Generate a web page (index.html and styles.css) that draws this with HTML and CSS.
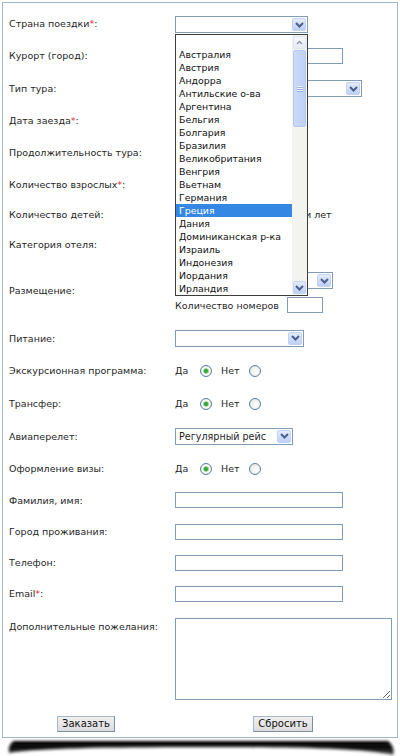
FILE: index.html
```html
<!DOCTYPE html>
<html lang="ru">
<head>
<meta charset="utf-8">
<title>Заявка на тур</title>
<link rel="stylesheet" href="styles.css">
</head>
<body>
<div class="form-box">
  <div class="form-grid">
    <div class="label">Страна поездки<span class="req">*</span>:</div>
    <div class="ctl">
      <div class="dd-wrap">
        <div class="select w133"><span class="val"></span><span class="arrow"><svg width="9" height="6" viewBox="0 0 9 6"><path d="M1 1 L4.5 4.5 L8 1" fill="none" stroke="#4a5f8c" stroke-width="2"/></svg></span></div>
        <div class="listbox">
          <ul class="items">
            <li class="item"></li>
            <li class="item">Австралия</li>
            <li class="item">Австрия</li>
            <li class="item">Андорра</li>
            <li class="item">Антильские о-ва</li>
            <li class="item">Аргентина</li>
            <li class="item">Бельгия</li>
            <li class="item">Болгария</li>
            <li class="item">Бразилия</li>
            <li class="item">Великобритания</li>
            <li class="item">Венгрия</li>
            <li class="item">Вьетнам</li>
            <li class="item">Германия</li>
            <li class="item selected">Греция</li>
            <li class="item">Дания</li>
            <li class="item">Доминиканская р-ка</li>
            <li class="item">Израиль</li>
            <li class="item">Индонезия</li>
            <li class="item">Иордания</li>
            <li class="item">Ирландия</li>
          </ul>
          <div class="scrollbar">
            <div class="sb-btn"><svg width="7" height="5" viewBox="0 0 7 5"><path d="M1 4 L3.5 1.5 L6 4" fill="none" stroke="#8a98b0" stroke-width="1.4"/></svg></div>
            <div class="sb-thumb"><span class="grip"></span></div>
            <div class="sb-track"></div>
            <div class="sb-btn sb-down"><svg width="9" height="6" viewBox="0 0 9 6"><path d="M1 1 L4.5 4.5 L8 1" fill="none" stroke="#4a5f8c" stroke-width="2"/></svg></div>
          </div>
        </div>
      </div>
    </div>

    <div class="label">Курорт (город):</div>
    <div class="ctl"><input class="text w168" type="text"></div>

    <div class="label">Тип тура:</div>
    <div class="ctl"><div class="select w187"><span class="val"></span><span class="arrow"><svg width="9" height="6" viewBox="0 0 9 6"><path d="M1 1 L4.5 4.5 L8 1" fill="none" stroke="#4a5f8c" stroke-width="2"/></svg></span></div></div>

    <div class="label">Дата заезда<span class="req">*</span>:</div>
    <div class="ctl"><input class="text w90" type="text"></div>

    <div class="label">Продолжительность тура:</div>
    <div class="ctl"><div class="select w60"><span class="val"></span><span class="arrow"></span></div></div>

    <div class="label">Количество взрослых<span class="req">*</span>:</div>
    <div class="ctl"><div class="select w45"><span class="val"></span><span class="arrow"></span></div></div>

    <div class="label">Количество детей:</div>
    <div class="ctl"><div class="select w122"><span class="val"></span><span class="arrow"></span></div><span class="kids-age">и лет</span></div>

    <div class="label">Категория отеля:</div>
    <div class="ctl"><div class="select w110"><span class="val"></span><span class="arrow"></span></div></div>

    <div class="label">Размещение:</div>
    <div class="ctl stack">
      <div class="select w158"><span class="val"></span><span class="arrow"><svg width="9" height="6" viewBox="0 0 9 6"><path d="M1 1 L4.5 4.5 L8 1" fill="none" stroke="#4a5f8c" stroke-width="2"/></svg></span></div>
      <div class="rooms"><span class="rooms-text">Количество номеров</span><input class="text w36" type="text"></div>
    </div>

    <div class="label">Питание:</div>
    <div class="ctl"><div class="select w129"><span class="val"></span><span class="arrow"><svg width="9" height="6" viewBox="0 0 9 6"><path d="M1 1 L4.5 4.5 L8 1" fill="none" stroke="#4a5f8c" stroke-width="2"/></svg></span></div></div>

    <div class="label">Экскурсионная программа:</div>
    <div class="ctl"><span class="opt-yes">Да</span><input class="radio" type="radio" name="exc" checked><span class="opt-no">Нет</span><input class="radio" type="radio" name="exc"></div>

    <div class="label">Трансфер:</div>
    <div class="ctl"><span class="opt-yes">Да</span><input class="radio" type="radio" name="tr" checked><span class="opt-no">Нет</span><input class="radio" type="radio" name="tr"></div>

    <div class="label">Авиаперелет:</div>
    <div class="ctl"><div class="select w118"><span class="val">Регулярный рейс</span><span class="arrow"><svg width="9" height="6" viewBox="0 0 9 6"><path d="M1 1 L4.5 4.5 L8 1" fill="none" stroke="#4a5f8c" stroke-width="2"/></svg></span></div></div>

    <div class="label">Оформление визы:</div>
    <div class="ctl"><span class="opt-yes">Да</span><input class="radio" type="radio" name="visa" checked><span class="opt-no">Нет</span><input class="radio" type="radio" name="visa"></div>

    <div class="label">Фамилия, имя:</div>
    <div class="ctl"><input class="text w168" type="text"></div>

    <div class="label">Город проживания:</div>
    <div class="ctl"><input class="text w168" type="text"></div>

    <div class="label">Телефон:</div>
    <div class="ctl"><input class="text w168" type="text"></div>

    <div class="label">Email<span class="req">*</span>:</div>
    <div class="ctl"><input class="text w168" type="text"></div>

    <div class="label label-top">Дополнительные пожелания:</div>
    <div class="ctl ctl-top"><textarea class="wishes"></textarea></div>

    <div class="btn-cell"><button class="btn btn-order" type="submit">Заказать</button></div>
    <div class="btn-cell"><button class="btn btn-reset" type="reset">Сбросить</button></div>
  </div>
</div>
<div class="shadow">
  <svg width="400" height="20" viewBox="0 0 400 20">
    <defs>
      <filter id="bl" x="-5%" y="-50%" width="110%" height="200%"><feGaussianBlur stdDeviation="1.7"/></filter>
      <linearGradient id="sg" x1="0" y1="0" x2="0" y2="1"><stop offset="0" stop-color="#000"/><stop offset="0.6" stop-color="#111"/><stop offset="1" stop-color="#555"/></linearGradient>
    </defs>
    <path d="M14 3 L388 3 C392 6 395 12 393 17 C360 10 300 9 200 9 C100 9 40 10 9 15 C8 10 10 5 14 3 Z" fill="url(#sg)" filter="url(#bl)"/>
  </svg>
</div>
</body>
</html>
```

FILE: styles.css
```css
* { box-sizing: border-box; }
html, body { margin: 0; padding: 0; background: #fff; }
body {
  width: 400px;
  height: 756px;
  overflow: hidden;
  font-family: "DejaVu Sans", Verdana, sans-serif;
  font-size: 9.5px;
  color: #1f1f1f;
}
.form-box {
  margin: 2px 2px 0 2px;
  border: 1px solid #9fb8cd;
  padding: 4px 0 5px 0;
}
.form-grid {
  display: grid;
  grid-template-columns: 172px 1fr;
  grid-template-rows: 32px 33px 33px 31px 33px 30px 30px 30px 63px 32px 32px 34px 32px 32px 32px 31px 31px 31px auto auto;
}
.label {
  align-self: center;
  padding-left: 6px;
  line-height: 13px;
  white-space: nowrap;
}
.req { color: #e3232b; }
.ctl {
  align-self: center;
  display: flex;
  align-items: center;
}
.stack {
  flex-direction: column;
  align-items: flex-start;
  gap: 8px;
  margin-top: 4px;
}
.label-top { align-self: start; padding-top: 11px; }
.ctl-top { align-self: start; padding: 9px 0 8px 0; }

/* select */
.dd-wrap { position: relative; margin-top: 3px; }
.select {
  display: flex;
  align-items: stretch;
  height: 17px;
  border: 1px solid #7f9db9;
  background: #fff;
}
.select .val {
  flex: 1;
  padding-left: 3px;
  line-height: 15px;
  font-size: 9.6px;
  white-space: nowrap;
  overflow: hidden;
}
.select .arrow {
  width: 14px;
  margin: 1px;
  border: 1px solid #c3d3f4;
  border-radius: 2px;
  background: linear-gradient(#e4ecfc, #bccff5);
  display: flex;
  align-items: center;
  justify-content: center;
}
.w133 { width: 133px; }
.w187 { width: 187px; }
.w60 { width: 60px; }
.w45 { width: 45px; }
.w122 { width: 122px; }
.w110 { width: 110px; }
.w158 { width: 158px; }
.w129 { width: 129px; }
.w118 { width: 118px; }

/* listbox overlay */
.listbox {
  position: absolute;
  left: 0;
  top: 18px;
  width: 133px;
  height: 262px;
  border: 1px solid #3c3c3c;
  background: #fff;
  display: flex;
  z-index: 5;
}
.items {
  list-style: none;
  margin: 0;
  padding: 0;
  flex: 1;
}
.item {
  height: 13px;
  line-height: 13px;
  padding-left: 3px;
  white-space: nowrap;
  font-size: 9.4px;
  color: #111;
}
.item.selected { background: #3587e4; color: #fff; }
.scrollbar {
  width: 15px;
  display: flex;
  flex-direction: column;
  background: #f3f3ef;
}
.sb-btn {
  height: 13px;
  margin: 1px;
  border: 1px solid #dfe5ef;
  border-radius: 2px;
  background: linear-gradient(#f6f8fb, #e6ebf3);
  display: flex;
  align-items: center;
  justify-content: center;
}
.sb-down {
  border-color: #c3d3f4;
  background: linear-gradient(#e4ecfc, #bccff5);
}
.sb-thumb {
  height: 77px;
  margin: 0 1px;
  border: 1px solid #b5c8ef;
  border-radius: 2px;
  background: linear-gradient(90deg, #cbdaf8, #bed0f5);
  display: flex;
  align-items: center;
  justify-content: center;
}
.grip {
  width: 6px;
  height: 6px;
  background: repeating-linear-gradient(#eef3fd 0 1px, #9db3e0 1px 2px);
}
.sb-track { flex: 1; }

.kids-age { margin-left: 8px; white-space: nowrap; }

/* text inputs */
.text {
  height: 16px;
  border: 1px solid #7f9db9;
  padding: 0 2px;
  margin: 0;
  background: #fff;
  font: inherit;
}
.w168 { width: 168px; }
.w90 { width: 90px; }
.w36 { width: 36px; }
.rooms { display: flex; align-items: center; }
.rooms-text { width: 112px; white-space: nowrap; }

/* radios */
.opt-yes { width: 25px; }
.opt-no { width: 28px; margin-left: 9px; }
.radio {
  -webkit-appearance: none;
  appearance: none;
  width: 12px;
  height: 12px;
  margin: 1px 0 0 0;
  border: 1px solid #5a7ea2;
  border-radius: 50%;
  background: radial-gradient(circle at 60% 60%, #ffffff 0%, #ececE6 65%, #d4d4cc 100%);
}
.radio:checked {
  background: radial-gradient(circle, #2e9e2e 0, #3fae3f 1.8px, #c8e8c0 2.8px, #ffffff 3.6px, #ececE6 70%, #d4d4cc 100%);
}

/* textarea */
.wishes {
  display: block;
  width: 217px;
  height: 82px;
  border: 1px solid #7f9db9;
  margin: 0;
  font: inherit;
  resize: both;
}

/* buttons */
.btn-cell { padding-top: 8px; display: flex; }
.btn {
  height: 16px;
  padding: 0;
  border: 1px solid #7d8fa3;
  border-top-color: #a9b8c8;
  border-left-color: #a9b8c8;
  background: linear-gradient(#f0f0f0, #dcdcdc);
  font-family: "DejaVu Sans", Verdana, sans-serif;
  font-size: 10px;
  line-height: 14px;
  color: #111;
}
.btn-order { width: 58px; margin-left: 54px; }
.btn-reset { width: 60px; margin-left: 78px; }

.shadow { height: 18px; line-height: 0; }
.shadow svg { display: block; }
```
